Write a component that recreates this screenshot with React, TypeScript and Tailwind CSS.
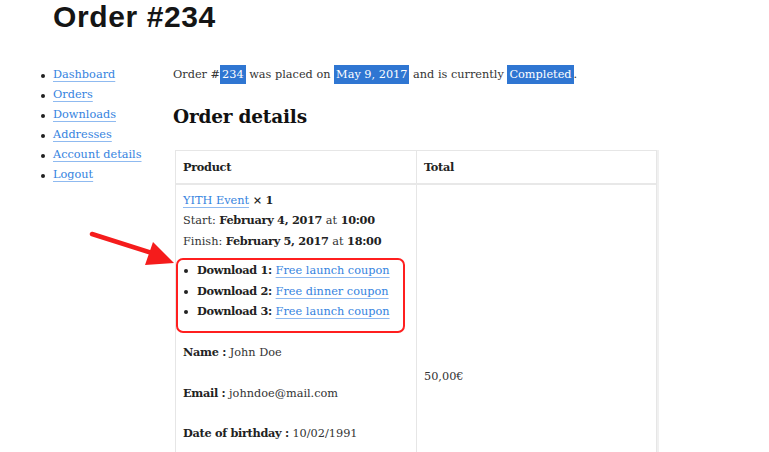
import React from "react";

const serif = { fontFamily: '"DejaVu Serif", "Liberation Serif", serif' };

function Link({ children }: { children: React.ReactNode }) {
  return (
    <a className="text-[#3583e0] underline decoration-[#8fbaf0] underline-offset-[3px] decoration-1">
      {children}
    </a>
  );
}

function Hl({ children }: { children: React.ReactNode }) {
  return <span className="bg-[#2f76d2] text-white px-[2px] py-[3px]">{children}</span>;
}

function B({ children }: { children: React.ReactNode }) {
  return <b className="text-[#222] tracking-[-0.3px]">{children}</b>;
}

function Dot({ className = "" }: { className?: string }) {
  return <span className={"absolute top-[9px] w-[4px] h-[4px] rounded-full bg-[#222] " + className} />;
}

function Line({ children, className = "" }: { children: React.ReactNode; className?: string }) {
  return (
    <div className={"h-[20px] leading-[20px] whitespace-nowrap overflow-visible " + className}>{children}</div>
  );
}

export default function App() {
  const nav = ["Dashboard", "Orders", "Downloads", "Addresses", "Account details", "Logout"];
  const downloads = [
    ["Download 1:", "Free launch coupon"],
    ["Download 2:", "Free dinner coupon"],
    ["Download 3:", "Free launch coupon"],
  ];
  return (
    <div className="relative w-[769px] h-[452px] overflow-hidden bg-white text-[#333]" style={serif}>
      <h1
        className="pl-[53px] pt-0 h-[65px] text-[30px] font-bold leading-[34px] text-[#151515] tracking-[0.6px]"
        style={{ fontFamily: '"Liberation Sans", Arial, sans-serif' }}
      >
        Order #234
      </h1>
      <div className="flex">
        <ul className="w-[173px] shrink-0 pl-[53px] text-[11.3px] leading-[20px]">
          {nav.map((n) => (
            <li key={n} className="relative">
              <Dot className="left-[-12px]" />
              <Link>{n}</Link>
            </li>
          ))}
        </ul>
        <div className="flex-1">
          <p className="text-[11.3px] leading-[20px]">
            Order #<Hl>234</Hl> was placed on <Hl>May 9, 2017</Hl> and is currently <Hl>Completed</Hl>.
          </p>
          <h2 className="mt-[20px] text-[18.5px] font-bold leading-[24px] text-[#111] tracking-[-0.2px]">
            Order details
          </h2>
          <div className="mt-[21px] ml-[2px] w-[482px] border border-[#e6e6e6] shadow-[2px_0_0_#f0f0f0] text-[11.3px]">
            <div className="flex border-b-[2px] border-[#e8e8e8] h-[34px] items-center font-bold text-[#222]">
              <div className="w-[241px] pl-[7px] border-r border-[#e6e6e6] h-full flex items-center tracking-[-0.3px]">
                Product
              </div>
              <div className="flex-1 pl-[7px] tracking-[-0.3px]">Total</div>
            </div>
            <div className="flex">
              <div className="w-[241px] border-r border-[#e6e6e6] pt-[5px] pl-[7px]">
                <Line>
                  <Link>YITH Event</Link> <B>× 1</B>
                </Line>
                <Line>
                  Start: <B>February 4, 2017</B> at <B>10:00</B>
                </Line>
                <Line className="mt-[1px]">
                  Finish: <B>February 5, 2017</B> at <B>18:00</B>
                </Line>
                <div className="mt-[7px] ml-[-7px] w-[229px] border-2 border-[#ff1f1f] rounded-[7px] pb-[10px] pt-0">
                  {downloads.map(([a, b], i) => (
                    <Line key={i} className={"relative pl-[19px]" + (i > 0 ? " mt-[0.5px]" : "")}>
                      <Dot className="left-[6px]" />
                      <B>{a}</B> <Link>{b}</Link>
                    </Line>
                  ))}
                </div>
                <Line className="mt-[9px]">
                  <B>Name :</B> John Doe
                </Line>
                <Line className="mt-[21px]">
                  <B>Email :</B> johndoe@mail.com
                </Line>
                <Line className="mt-[20px]">
                  <B>Date of birthday :</B> 10/02/1991
                </Line>
                <div className="h-[120px]" />
              </div>
              <div className="flex-1 pl-[7px] h-[384px] flex items-center">50,00€</div>
            </div>
          </div>
        </div>
      </div>
      <svg className="absolute left-0 top-0 pointer-events-none" width="769" height="452">
        <line x1="92" y1="234" x2="158" y2="255" stroke="#f51c1c" strokeWidth="4.5" strokeLinecap="round" />
        <polygon points="153,242 174,263 145,265" fill="#f51c1c" />
      </svg>
    </div>
  );
}
